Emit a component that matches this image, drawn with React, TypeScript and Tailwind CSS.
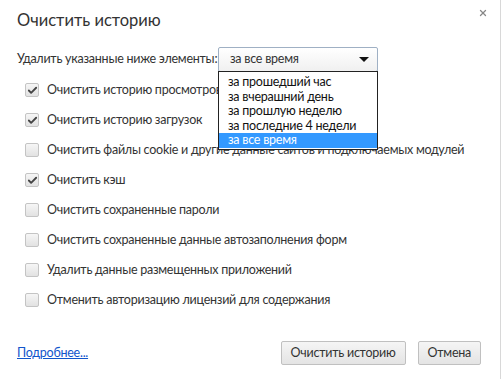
import {Check, X} from 'lucide-react'

const options = ['за прошедший час', 'за вчерашний день', 'за прошлую неделю', 'за последние 4 недели', 'за все время']

const items = [
  {label: 'Очистить историю просмотров', on: true},
  {label: 'Очистить историю загрузок', on: true},
  {label: 'Очистить файлы cookie и другие данные сайтов и подключаемых модулей', on: false},
  {label: 'Очистить кэш', on: true},
  {label: 'Очистить сохраненные пароли', on: false},
  {label: 'Очистить сохраненные данные автозаполнения форм', on: false},
  {label: 'Удалить данные размещенных приложений', on: false},
  {label: 'Отменить авторизацию лицензий для содержания', on: false}
]

function Box({on}: {on: boolean}) {
  return (
    <span className="flex h-[14px] w-[14px] shrink-0 items-center justify-center rounded-[2px] border border-[#c4c4c4] bg-gradient-to-b from-[#f6f6f6] to-[#e2e2e2]">
      {on && <Check size={11} strokeWidth={4} className="text-[#444]" />}
    </span>
  )
}

export default function App() {
  return (
    <main
      className="relative flex h-[379px] w-[501px] flex-col border-r border-[#d8d8d8] bg-white text-[12.5px] tracking-[-0.25px] text-[#333]"
      style={{fontFamily: 'Lato, "Noto Sans", sans-serif'}}
    >
      <X size={10} strokeWidth={3} className="absolute right-[12px] top-[8px] text-[#888]" />
      <h1 className="pl-[17px] pt-[10px] text-[16.5px] leading-[20px] tracking-normal text-[#333]">Очистить историю</h1>

      <div className="mt-[17px] flex items-center pl-[17px]">
        <span className="w-[201px] whitespace-nowrap">Удалить указанные ниже элементы:</span>
        <div className="relative">
          <div className="flex h-[25px] w-[160px] items-center justify-between rounded-[2px] border border-[#9fb0c4] bg-gradient-to-b from-white to-[#f0f0f0] pl-[11px] pr-[8px]">
            <span>за все время</span>
            <span className="h-0 w-0 border-x-[5px] border-t-[5px] border-x-transparent border-t-[#111]" />
          </div>
          <ul className="absolute left-0 top-[24px] z-10 flex w-[160px] flex-col border border-[#222] bg-white pt-[3px] pb-[1px] leading-[14.5px] text-[#111]">
            {options.map((o, i) => (
              <li key={o} className={i === 4 ? 'bg-[#3399ff] pl-[9px] text-white' : 'pl-[9px]'}>
                {o}
              </li>
            ))}
          </ul>
        </div>
      </div>

      <ul className="mt-[3px] flex flex-col">
        {items.map(it => (
          <li key={it.label} className="flex h-[30px] items-center gap-[8px] pl-[25px] whitespace-nowrap">
            <Box on={it.on} />
            <span>{it.label}</span>
          </li>
        ))}
      </ul>

      <div className="mt-auto mb-[14px] flex items-center pl-[17px] pr-[19px]">
        <a href="#" className="text-[#15c] underline">Подробнее...</a>
        <div className="ml-auto flex gap-[12px]">
          <button className="h-[24px] rounded-[2px] border border-[#c0c0c0] bg-gradient-to-b from-[#f5f5f5] to-[#e4e4e4] px-[9px] text-[#333]">
            Очистить историю
          </button>
          <button className="h-[24px] rounded-[2px] border border-[#c0c0c0] bg-gradient-to-b from-[#f5f5f5] to-[#e4e4e4] px-[9px] text-[#333]">
            Отмена
          </button>
        </div>
      </div>
    </main>
  )
}
